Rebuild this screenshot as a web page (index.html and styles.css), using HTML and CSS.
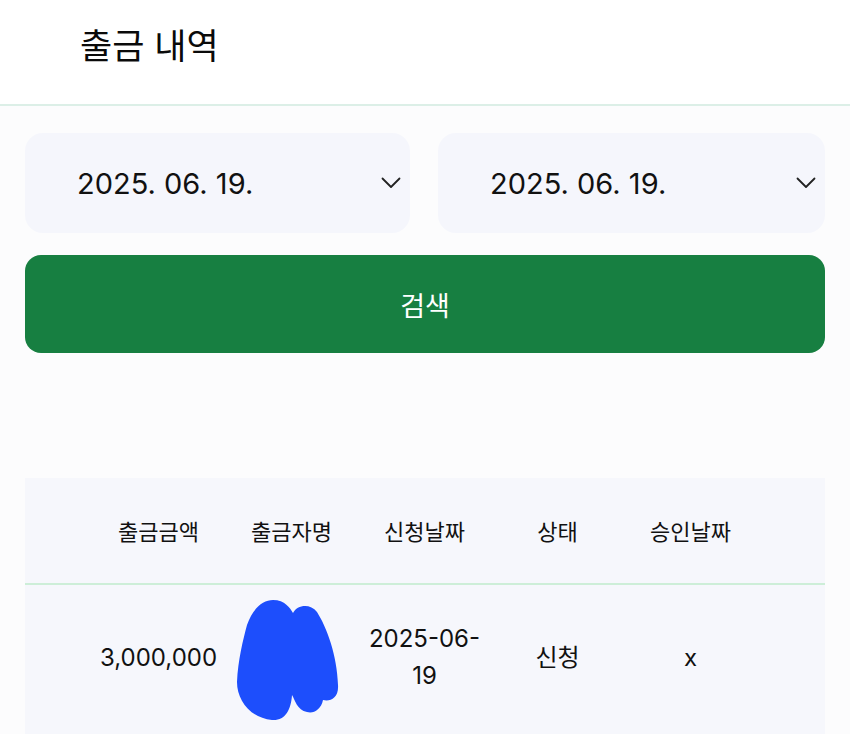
FILE: index.html
```html
<!DOCTYPE html>
<html lang="ko">
<head>
<meta charset="utf-8">
<link rel="stylesheet" href="styles.css">
</head>
<body>
<header class="topbar">
  <h1 class="title">출금 내역</h1>
</header>
<main class="content">
  <div class="dates">
    <div class="date-box">
      <span class="date-text">2025. 06. 19.</span>
      <svg class="chev" width="20" height="12" viewBox="0 0 20 12"><path d="M1.5 1.5 L10 10 L18.5 1.5" fill="none" stroke="#222" stroke-width="1.8" stroke-linecap="round" stroke-linejoin="round"/></svg>
    </div>
    <div class="date-box">
      <span class="date-text">2025. 06. 19.</span>
      <svg class="chev" width="20" height="12" viewBox="0 0 20 12"><path d="M1.5 1.5 L10 10 L18.5 1.5" fill="none" stroke="#222" stroke-width="1.8" stroke-linecap="round" stroke-linejoin="round"/></svg>
    </div>
  </div>
  <button class="search-btn">검색</button>
  <div class="table">
    <div class="row head">
      <div class="cell">출금금액</div>
      <div class="cell">출금자명</div>
      <div class="cell">신청날짜</div>
      <div class="cell">상태</div>
      <div class="cell">승인날짜</div>
    </div>
    <div class="row data">
      <div class="cell">3,000,000</div>
      <div class="cell">
        <svg class="blob" width="104" height="122" viewBox="0 0 104 122"><path d="M38,0 C50,0 55,8 58,13 C62,5 75,3 82,12 C92,28 102,55 103,85 C104,98 95,102 88,100 C86,110 78,114 72,112 C62,110 60,100 57,95 C56,110 50,121 37,120 C15,118 2,100 2,82 C3,60 8,40 12,25 C18,8 28,0 38,0 Z" fill="#1d4efc"/></svg>
      </div>
      <div class="cell wrap">2025-06-<wbr>19</div>
      <div class="cell">신청</div>
      <div class="cell">x</div>
    </div>
  </div>
</main>
</body>
</html>
```
FILE: styles.css
```css
* { box-sizing: border-box; }
html, body { margin: 0; padding: 0; }
body {
  background: #fcfcfd;
  font-family: "Inter", "Noto Sans CJK KR", sans-serif;
  color: #111;
  width: 850px;
  height: 734px;
  overflow: hidden;
}
.topbar {
  background: #ffffff;
  height: 106px;
  border-bottom: 2px solid #dcefe7;
  padding-left: 80px;
  display: flex;
  align-items: flex-start;
}
.title {
  margin: 0;
  margin-top: 19px;
  font-size: 35px;
  font-weight: 400;
  line-height: 50px;
  font-family: "Noto Sans CJK KR", sans-serif;
  color: #0a0a0a;
}
.content {
  padding: 27px 25px 0 25px;
}
.dates {
  display: grid;
  grid-template-columns: 385px 387px;
  column-gap: 28px;
}
.date-box {
  height: 100px;
  background: #f5f6fc;
  border-radius: 18px;
  display: flex;
  align-items: center;
  justify-content: space-between;
  padding: 0 9px 0 52px;
}
.date-text {
  font-size: 29px;
  font-weight: 400;
  color: #111;
}
.chev { display: block; }
.search-btn {
  display: block;
  width: 800px;
  height: 98px;
  margin-top: 22px;
  border: none;
  border-radius: 16px;
  background: #177f41;
  color: #fff;
  font-family: "Noto Sans CJK KR", sans-serif;
  font-size: 27px;
  font-weight: 400;
}
.table {
  margin-top: 125px;
  width: 800px;
  background: #f6f7fc;
}
.row {
  display: grid;
  grid-template-columns: repeat(5, 133px);
  padding-left: 67px;
  align-items: center;
}
.row.head {
  height: 107px;
  border-bottom: 2px solid #cdeed8;
}
.row.data {
  height: 152px;
  padding-bottom: 8px;
}
.cell {
  text-align: center;
  font-size: 22px;
  line-height: 37px;
  font-family: "Noto Sans CJK KR", sans-serif;
  color: #111;
  display: flex;
  justify-content: center;
}
.row.data .cell {
  font-family: "Inter", "Noto Sans CJK KR", sans-serif;
  font-size: 24px;
}
.cell.wrap {
  display: block;
  padding: 0 8px;
}
.blob { display: block; margin-left: -10px; margin-top: 8px; }
```
